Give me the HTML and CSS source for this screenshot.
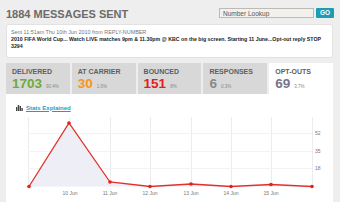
FILE: index.html
```html
<!DOCTYPE html>
<html>
<head>
<meta charset="utf-8">
<link rel="stylesheet" href="styles.css">
</head>
<body>
<div class="page">
  <div class="header">
    <h1 class="title">1884 MESSAGES SENT</h1>
    <form class="lookup">
      <input class="lookup-input" type="text" value="Number Lookup">
      <button class="go" type="button">GO</button>
    </form>
  </div>
  <div class="message">
    <div class="meta">Sent 11:51am Thu 10th Jun 2010 from REPLY-NUMBER</div>
    <div class="body">2010 FIFA World Cup... Watch LIVE matches 9pm &amp; 11.30pm @ KBC on the big screen. Starting 11 June...Opt-out reply STOP<br>3294</div>
  </div>
  <div class="tabs">
    <div class="tab"><div class="tab-label">DELIVERED</div><div class="tab-value"><span class="num green">1703</span><span class="pct">90.4%</span></div></div>
    <div class="tab"><div class="tab-label">AT CARRIER</div><div class="tab-value"><span class="num orange">30</span><span class="pct">1.6%</span></div></div>
    <div class="tab"><div class="tab-label">BOUNCED</div><div class="tab-value"><span class="num red">151</span><span class="pct">8%</span></div></div>
    <div class="tab"><div class="tab-label">RESPONSES</div><div class="tab-value"><span class="num grey">6</span><span class="pct">0.3%</span></div></div>
    <div class="tab active"><div class="tab-label">OPT-OUTS</div><div class="tab-value"><span class="num slate">69</span><span class="pct">3.7%</span></div></div>
  </div>
  <div class="panel">
    <div class="explain">
      <svg class="bars" width="7" height="6" viewBox="0 0 7 6"><rect x="0" y="2" width="1.4" height="4" fill="#444"/><rect x="1.8" y="0" width="1.4" height="6" fill="#444"/><rect x="3.6" y="1" width="1.4" height="5" fill="#444"/><rect x="5.4" y="3" width="1.4" height="3" fill="#444"/></svg>
      <a class="explain-link" href="#">Stats Explained</a>
    </div>
    <svg class="chart" width="327" height="90" viewBox="6 112 327 90">
      <g stroke="#ececec" stroke-width="1">
        <line x1="28.5" y1="117" x2="28.5" y2="187"/>
        <line x1="69.5" y1="117" x2="69.5" y2="187"/>
        <line x1="110.5" y1="117" x2="110.5" y2="187"/>
        <line x1="150.5" y1="117" x2="150.5" y2="187"/>
        <line x1="191.5" y1="117" x2="191.5" y2="187"/>
        <line x1="231.5" y1="117" x2="231.5" y2="187"/>
        <line x1="271.5" y1="117" x2="271.5" y2="187"/>
        <line x1="312.5" y1="117" x2="312.5" y2="187"/>
      </g>
      <g stroke="#f3f3f3" stroke-width="1">
        <line x1="28" y1="133.5" x2="312" y2="133.5"/>
        <line x1="28" y1="151.5" x2="312" y2="151.5"/>
        <line x1="28" y1="168.5" x2="312" y2="168.5"/>
      </g>
      <polygon points="29,186.5 69,123 110,182 150,186.5 191,184 231,186.5 271,184.5 312,186.5" fill="#eeeef6"/>
      <polyline points="29,186.5 69,123 110,182 150,186.5 191,184 231,186.5 271,184.5 312,186.5" fill="none" stroke="#e2312c" stroke-width="1.3"/>
      <g fill="#e2211c">
        <circle cx="29" cy="186.5" r="1.8"/>
        <circle cx="69" cy="123" r="1.8"/>
        <circle cx="110" cy="182" r="1.8"/>
        <circle cx="150" cy="186.5" r="1.8"/>
        <circle cx="191" cy="184" r="1.8"/>
        <circle cx="231" cy="186.5" r="1.8"/>
        <circle cx="271" cy="184.5" r="1.8"/>
        <circle cx="312" cy="186.5" r="1.8"/>
      </g>
      <g class="xl" text-anchor="middle">
        <text x="70" y="194.5">10 Jun</text>
        <text x="110" y="194.5">11 Jun</text>
        <text x="150" y="194.5">12 Jun</text>
        <text x="191" y="194.5">13 Jun</text>
        <text x="231" y="194.5">14 Jun</text>
        <text x="271" y="194.5">15 Jun</text>
      </g>
      <g class="yl">
        <text x="315" y="135">52</text>
        <text x="315" y="153">35</text>
        <text x="315" y="170">18</text>
      </g>
    </svg>
  </div>
</div>
</body>
</html>
```
FILE: styles.css
```css
html, body {
  margin: 0;
  padding: 0;
  background: #eeeeee;
  font-family: "Liberation Sans", Arial, sans-serif;
}
.page {
  padding: 8px 6px 0 6px;
  width: 327px;
}
.header {
  display: flex;
  justify-content: space-between;
  align-items: center;
  height: 10px;
}
.title {
  margin: 0;
  font-size: 11px;
  line-height: 10px;
  font-weight: bold;
  color: #6b6b6b;
  padding-top: 1px;
}
.lookup {
  display: flex;
  gap: 2px;
  margin: 0 -1px 0 0;
}
.lookup-input {
  box-sizing: border-box;
  width: 95px;
  height: 10px;
  margin: 0;
  padding: 0 3px;
  border: 1px solid #bdbbb5;
  background: #f3f1ec;
  font-family: "Liberation Sans", Arial, sans-serif;
  font-size: 6.5px;
  color: #555;
  outline: none;
}
.go {
  box-sizing: border-box;
  width: 18px;
  height: 10px;
  margin: 0;
  padding: 0;
  border: none;
  border-radius: 1px;
  background: #1b9db3;
  color: #fff;
  font-family: "Liberation Sans", Arial, sans-serif;
  font-weight: bold;
  font-size: 6.5px;
  line-height: 10px;
}
.message {
  margin-top: 6px;
  background: #fff;
  border: 1px solid #e2e2e2;
  border-radius: 3px;
  padding: 4px 4px 5px 4px;
  height: 23px;
}
.meta {
  font-size: 5.4px;
  line-height: 7px;
  color: #777;
}
.body {
  font-size: 5.25px;
  line-height: 7px;
  font-weight: bold;
  color: #222;
  white-space: nowrap;
}
.tabs {
  display: flex;
  gap: 2px;
  margin-top: 5px;
}
.tab {
  flex: 1;
  background: #d8d8d8;
  padding: 5px 6px;
  height: 21px;
}
.tab.active {
  background: #fff;
}
.tab-label {
  font-size: 7px;
  line-height: 8px;
  font-weight: bold;
  color: #5e5e5e;
}
.tab-value {
  line-height: 13px;
  white-space: nowrap;
}
.num {
  font-size: 13.5px;
  font-weight: bold;
}
.pct {
  font-size: 4.5px;
  color: #888;
  margin-left: 4px;
}
.green { color: #6cab3c; }
.orange { color: #f7941d; }
.red { color: #e41e1e; }
.grey { color: #888888; }
.slate { color: #76768a; }
.panel {
  background: #fff;
  height: 108px;
}
.explain {
  display: flex;
  align-items: center;
  gap: 3px;
  padding: 9px 0 0 10px;
  height: 9px;
}
.explain-link {
  font-size: 6px;
  line-height: 8px;
  font-weight: bold;
  color: #1aa0c4;
  text-decoration: underline;
}
.chart {
  display: block;
  margin-top: 0;
}
.xl text {
  font-family: "Liberation Sans", Arial, sans-serif;
  font-size: 5px;
  fill: #777;
}
.yl text {
  font-family: "Liberation Sans", Arial, sans-serif;
  font-size: 5px;
  fill: #777;
}
```
